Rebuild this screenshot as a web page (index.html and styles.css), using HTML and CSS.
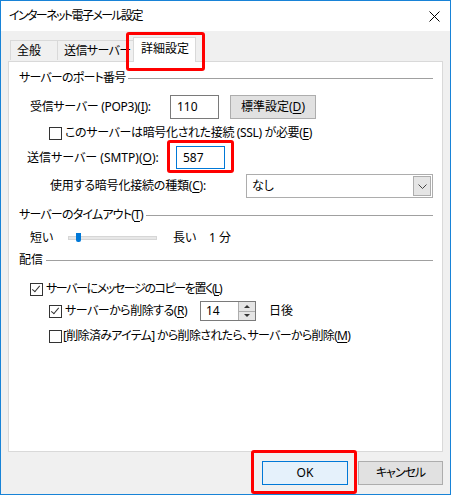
FILE: index.html
```html
<!DOCTYPE html>
<html lang="ja">
<head>
    <meta charset="UTF-8">
    <title>インターネット電子メール設定</title>
    <link rel="stylesheet" href="styles.css">
</head>
<body>
    <div class="window">
        <!-- Title bar -->
        <div class="titlebar">
            <span class="title">インターネット電子メール設定</span>
            <svg class="close" width="11" height="11" viewBox="0 0 11 11">
                <path d="M0.5 0.5 L10.5 10.5 M10.5 0.5 L0.5 10.5" stroke="#000" stroke-width="1" fill="none"/>
            </svg>
        </div>

        <div class="body">
            <!-- Tabs -->
            <div class="tabs">
                <div class="tab">全般</div>
                <div class="tab tab-wide">送信サーバー</div>
                <div class="tab active">詳細設定</div>
            </div>

            <!-- Tab panel -->
            <div class="panel">
                <div class="group-head gh-port"><span>サーバーのポート番号</span></div>

                <div class="row row-pop">
                    <span class="label">受信サーバー (POP3)(<u>I</u>):</span>
                    <div class="field port">110</div>
                    <div class="btn btn-default">標準設定(<u>D</u>)</div>
                </div>

                <div class="row row-ssl">
                    <span class="check"></span>
                    <span>このサーバーは暗号化された接続 (SSL) が必要(<u>E</u>)</span>
                </div>

                <div class="row row-smtp">
                    <span class="label">送信サーバー (SMTP)(<u>O</u>):</span>
                    <div class="field port focus">587</div>
                </div>

                <div class="row row-enc">
                    <span class="label">使用する暗号化接続の種類(<u>C</u>):</span>
                    <div class="combo">
                        <span>なし</span>
                        <span class="combo-btn">
                            <svg width="9" height="5" viewBox="0 0 9 5"><path d="M0.5 0.5 L4.5 4.5 L8.5 0.5" stroke="#444" fill="none"/></svg>
                        </span>
                    </div>
                </div>

                <div class="group-head gh-timeout"><span>サーバーのタイムアウト(<u>T</u>)</span></div>

                <div class="row row-slider">
                    <span class="short">短い</span>
                    <div class="track"><span class="thumb"></span></div>
                    <span class="long">長い</span>
                    <span class="minutes">1 分</span>
                </div>

                <div class="group-head gh-deliver"><span>配信</span></div>

                <div class="row row-copy">
                    <span class="check checked"></span>
                    <span>サーバーにメッセージのコピーを置く(<u>L</u>)</span>
                </div>

                <div class="row row-delete">
                    <span class="check checked"></span>
                    <span class="del-label">サーバーから削除する(<u>R</u>)</span>
                    <div class="spin">
                        <span class="spin-val">14</span>
                        <span class="spin-btns">
                            <span class="spin-up"></span>
                            <span class="spin-down"></span>
                        </span>
                    </div>
                    <span class="days">日後</span>
                </div>

                <div class="row row-trash">
                    <span class="check"></span>
                    <span>[削除済みアイテム] から削除されたら、サーバーから削除(<u>M</u>)</span>
                </div>
            </div>

            <!-- Dialog buttons -->
            <div class="footer">
                <div class="btn btn-ok">OK</div>
                <div class="btn btn-cancel">キャンセル</div>
            </div>
        </div>

        <!-- Red highlight marks -->
        <div class="mark mark-tab"></div>
        <div class="mark mark-smtp"></div>
        <div class="mark mark-ok"></div>
    </div>
</body>
</html>
```

FILE: styles.css
```css
* {
    box-sizing: border-box;
}

body {
    margin: 0;
    font-family: "Noto Sans", "Noto Sans CJK JP", sans-serif;
    font-size: 12px;
    line-height: 16px;
    color: #000;
    font-feature-settings: "palt";
}

u {
    text-decoration: underline;
    text-underline-offset: 2px;
}

/* Window frame */
.window {
    position: relative;
    width: 451px;
    height: 495px;
    border: 1px solid #1883d7;
    background: #f0f0f0;
    display: flex;
    flex-direction: column;
}

.titlebar {
    height: 30px;
    background: #fff;
    display: flex;
    align-items: center;
    justify-content: space-between;
    padding: 0 10px 0 8px;
    flex-shrink: 0;
}

.title {
    letter-spacing: -1.6px;
}

.close {
    margin-top: 1px;
}

.body {
    flex: 1;
    display: flex;
    flex-direction: column;
    padding: 6px 7px 0 7px;
}

/* Tabs */
.tabs {
    display: flex;
    align-items: flex-end;
    height: 24px;
    padding-left: 2px;
    position: relative;
    z-index: 2;
}

.tab {
    height: 20px;
    border: 1px solid #d9d9d9;
    border-bottom: none;
    background: #f0f0f0;
    padding: 2px 0 0 6px;
    width: 48px;
    margin-bottom: 1px;
    overflow: hidden;
    white-space: nowrap;
}

.tab + .tab {
    margin-left: -1px;
}

.tab-wide {
    width: 78px;
    letter-spacing: -0.6px;
}

.tab.active {
    width: 63px;
    height: 25px;
    margin-left: -2px;
    margin-bottom: -1px;
    background: #fff;
    padding: 3px 0 0 7px;
    letter-spacing: 0;
}

.panel {
    height: 391px;
    background: #fff;
    border: 1px solid #d9d9d9;
    padding: 8px 9px 0 10px;
    display: flex;
    flex-direction: column;
}

/* Group headings with rule */
.group-head {
    height: 16px;
    display: flex;
    align-items: center;
    gap: 3px;
    flex-shrink: 0;
}

.group-head::after {
    content: "";
    flex: 1;
    height: 1px;
    background: #a0a0a0;
    margin-top: 1px;
}

.gh-port span,
.gh-timeout span {
    letter-spacing: -0.8px;
}

.gh-timeout {
    margin-top: 9px;
}

.gh-deliver {
    margin-top: 6px;
}

.row {
    display: flex;
    align-items: center;
    flex-shrink: 0;
    white-space: nowrap;
}

.row-pop {
    height: 24px;
    margin-top: 9px;
    padding-left: 11px;
}

.row-ssl {
    height: 14px;
    margin-top: 7px;
    padding-left: 30px;
    letter-spacing: -0.35px;
}

.row-smtp {
    height: 23px;
    margin-top: 6px;
    padding-left: 8px;
}

.row-enc {
    height: 24px;
    margin-top: 5px;
    padding-left: 31px;
}

.row-pop .label {
    width: 140px;
    letter-spacing: -0.3px;
}

.row-smtp .label {
    width: 149px;
}

.row-enc .label {
    width: 196px;
    letter-spacing: -0.2px;
}

.field {
    height: 100%;
    border: 1px solid #7a7a7a;
    background: #fff;
    padding: 0 6px;
    display: flex;
    align-items: center;
}

.port {
    width: 49px;
}

.field.focus {
    border-color: #0078d7;
}

/* Buttons */
.btn {
    display: flex;
    align-items: center;
    justify-content: center;
    border: 1px solid #adadad;
    background: #e1e1e1;
}

.btn-default {
    width: 86px;
    height: 24px;
    margin-left: 11px;
}

.combo {
    width: 187px;
    height: 24px;
    border: 1px solid #adadad;
    background: #fff;
    display: flex;
    align-items: center;
    justify-content: space-between;
    padding: 0 1px 0 5px;
}

.combo-btn {
    width: 18px;
    height: 20px;
    background: #e5e5e5;
    border: 1px solid #adadad;
    display: flex;
    align-items: center;
    justify-content: center;
}

/* Timeout slider */
.row-slider {
    height: 16px;
    margin-top: 7px;
    padding-left: 11px;
}

.short {
    width: 38px;
}

.track {
    position: relative;
    width: 89px;
    height: 4px;
    background: #e7e7e7;
    border: 1px solid #d6d6d6;
}

.thumb {
    position: absolute;
    left: 7px;
    top: -4px;
    width: 5px;
    height: 9px;
    background: #0078d7;
    border-radius: 0 0 2px 2px;
}

.long {
    margin-left: 16px;
    width: 36px;
}

/* Checkboxes */
.check {
    width: 13px;
    height: 13px;
    border: 1px solid #333;
    background: #fff;
    margin-right: 3px;
    flex-shrink: 0;
    position: relative;
}

.check.checked::after {
    content: "";
    position: absolute;
    left: 3px;
    top: 0px;
    width: 3px;
    height: 7px;
    border: solid #333;
    border-width: 0 1px 1px 0;
    transform: rotate(40deg);
}

.row-copy {
    height: 14px;
    margin-top: 14px;
    padding-left: 11px;
    letter-spacing: -1.4px;
}

.row-delete {
    height: 20px;
    margin-top: 5px;
    padding-left: 30px;
}

.del-label {
    width: 135px;
    letter-spacing: -0.5px;
}

.spin {
    width: 56px;
    height: 20px;
    border: 1px solid #7a7a7a;
    background: #fff;
    display: flex;
    align-items: center;
    justify-content: space-between;
    padding-left: 5px;
}

.spin-btns {
    width: 17px;
    height: 18px;
    display: flex;
    flex-direction: column;
    border-left: 1px solid #adadad;
}

.spin-up,
.spin-down {
    flex: 1;
    background: #e5e5e5;
    display: flex;
    align-items: center;
    justify-content: center;
}

.spin-up {
    border-bottom: 1px solid #adadad;
}

.spin-up::after {
    content: "";
    border: 3px solid transparent;
    border-bottom: 3px solid #333;
    border-top: none;
}

.spin-down::after {
    content: "";
    border: 3px solid transparent;
    border-top: 3px solid #333;
    border-bottom: none;
}

.days {
    margin-left: 13px;
}

.row-trash {
    height: 14px;
    margin-top: 8px;
    padding-left: 30px;
    letter-spacing: -0.68px;
}

.row-trash .check {
    margin-right: 1px;
}

/* Footer buttons */
.footer {
    display: flex;
    justify-content: flex-end;
    gap: 10px;
    padding-top: 9px;
}

.btn-ok,
.btn-cancel {
    width: 86px;
    height: 24px;
}

.btn-ok {
    background: #e5f1fb;
    border-color: #0078d7;
}

.btn-cancel {
    width: 85px;
    letter-spacing: -1px;
}

/* Red highlight annotations */
.mark {
    position: absolute;
    border: 3px solid #f00;
    border-radius: 3px;
    z-index: 5;
}

.mark-tab {
    left: 125px;
    top: 31px;
    width: 79px;
    height: 39px;
}

.mark-smtp {
    left: 166px;
    top: 139px;
    width: 67px;
    height: 33px;
}

.mark-ok {
    left: 250px;
    top: 449px;
    width: 106px;
    height: 44px;
}
```
